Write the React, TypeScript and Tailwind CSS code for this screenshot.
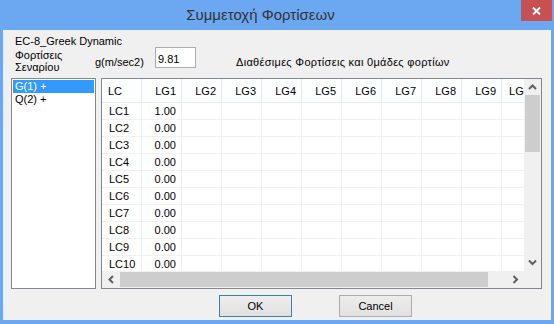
import React from 'react';

const cols = ['LG1', 'LG2', 'LG3', 'LG4', 'LG5', 'LG6', 'LG7', 'LG8', 'LG9', 'LG10'];
const rows = Array.from({ length: 10 }, (_, i) => ({
  name: `LC${i + 1}`,
  lg1: i === 0 ? '1.00' : '0.00',
}));

function Chevron({ dir }: { dir: 'up' | 'down' | 'left' | 'right' }) {
  const d = {
    up: 'M1 5 L4.5 1.5 L8 5',
    down: 'M1 1.5 L4.5 5 L8 1.5',
    left: 'M5 1 L1.5 4.5 L5 8',
    right: 'M1.5 1 L5 4.5 L1.5 8',
  }[dir];
  const horiz = dir === 'up' || dir === 'down';
  return (
    <svg width={horiz ? 9 : 7} height={horiz ? 7 : 9} viewBox={horiz ? '0 0 9 7' : '0 0 7 9'}>
      <path d={d} fill="none" stroke="#606060" strokeWidth="2" />
    </svg>
  );
}

export default function App() {
  return (
    <div
      className="w-[554px] h-[324px] bg-[#6ba8f1] flex flex-col overflow-hidden text-[11px] text-black"
      style={{ fontFamily: '"Liberation Sans", Arial, sans-serif' }}
    >
      {/* title bar */}
      <div className="h-[30px] flex pr-[2px] shrink-0">
        <div className="flex-1 text-center text-[15px] text-[#333] pt-[5px] leading-[20px]">
          Συμμετοχή Φορτίσεων
        </div>
        <div className="w-[31px] h-[21px] bg-[#c75050] flex items-center justify-center">
          <svg width="9" height="8" viewBox="0 0 9 8">
            <path d="M1 0.5 L8 7.5 M8 0.5 L1 7.5" stroke="white" strokeWidth="2" />
          </svg>
        </div>
      </div>

      {/* client area */}
      <div className="mx-[3px] mb-[4px] flex-1 bg-[#f0f0f0] flex flex-col pl-[8px]">
        <div className="mt-[5px] h-[12px] leading-[12px] pl-[4px]">EC-8_Greek Dynamic</div>

        <div className="h-[31px] flex items-start">
          <div className="w-[84px] pl-[4px] mt-[2px] leading-[12px]">
            Φορτίσεις
            <br />
            Σεναρίου
          </div>
          <div className="w-[60px] mt-[9px] leading-[13px]">g(m/sec2)</div>
          <div className="w-[41px] h-[21px] border border-[#abadb3] bg-white pl-[2px] pt-[5px] leading-[13px]">
            9.81
          </div>
          <div className="ml-[40px] mt-[9px] leading-[13px] tracking-[0.3px]">
            Διαθέσιμες Φορτίσεις και 0μάδες φορτίων
          </div>
        </div>

        <div className="h-[211px] flex">
          {/* left list */}
          <div className="w-[85px] border border-[#828790] bg-white p-[1px]">
            <div className="h-[13px] leading-[13px] bg-[#3399ff] text-white pl-[2px]">G(1) +</div>
            <div className="h-[13px] leading-[13px] pl-[2px]">Q(2) +</div>
          </div>

          {/* grid */}
          <div className="ml-[5px] w-[441px] border border-[#828790] bg-white flex flex-col">
            <div className="h-[192px] flex">
              <div className="w-[422px] overflow-hidden">
                <div className="flex h-[24px] border-b border-[#e2ebf7] bg-[#fdfeff] w-max">
                  <div className="w-[40px] shrink-0 border-r border-[#e2ebf7] pl-[6px] flex items-center pt-[2px]">LC</div>
                  {cols.map((c) => (
                    <div
                      key={c}
                      className="w-[40px] shrink-0 border-r border-[#e2ebf7] pr-[5px] flex items-center justify-end pt-[2px]"
                    >
                      {c}
                    </div>
                  ))}
                </div>
                {rows.map((r) => (
                  <div key={r.name} className="flex h-[17px] border-b border-[#f0f0f0] w-max">
                    <div className="w-[40px] shrink-0 border-r border-[#f0f0f0] pl-[7px] leading-[16px]">{r.name}</div>
                    <div className="w-[40px] shrink-0 border-r border-[#f0f0f0] pr-[5px] text-right leading-[16px]">
                      {r.lg1}
                    </div>
                    {cols.slice(1).map((c) => (
                      <div key={c} className="w-[40px] shrink-0 border-r border-[#f0f0f0]" />
                    ))}
                  </div>
                ))}
              </div>
              {/* vertical scrollbar */}
              <div className="w-[17px] bg-[#f0f0f0] flex flex-col">
                <div className="h-[16px] flex items-center justify-center">
                  <Chevron dir="up" />
                </div>
                <div className="h-[57px] w-[15px] ml-[1px] bg-[#cdcdcd]" />
                <div className="flex-1" />
                <div className="h-[17px] flex items-center justify-center">
                  <Chevron dir="down" />
                </div>
              </div>
            </div>
            {/* horizontal scrollbar */}
            <div className="h-[17px] flex">
              <div className="w-[422px] bg-[#f0f0f0] flex items-center">
                <div className="w-[18px] h-[17px] flex items-center justify-center">
                  <Chevron dir="left" />
                </div>
                <div className="w-[368px] h-[15px] bg-[#cdcdcd]" />
                <div className="flex-1" />
                <div className="w-[18px] h-[17px] flex items-center justify-center">
                  <Chevron dir="right" />
                </div>
              </div>
              <div className="w-[17px] bg-[#f0f0f0]" />
            </div>
          </div>
        </div>

        <div className="mt-[6px] flex ml-[208px] gap-[47px]">
          <button className="w-[73px] h-[22px] border border-[#3c7fb1] bg-gradient-to-b from-[#ededed] to-[#e1e1e1] leading-[20px] text-[11px]">
            OK
          </button>
          <button className="w-[73px] h-[22px] border border-[#acacac] bg-gradient-to-b from-[#ededed] to-[#e1e1e1] leading-[20px] text-[11px]">
            Cancel
          </button>
        </div>
      </div>
    </div>
  );
}
